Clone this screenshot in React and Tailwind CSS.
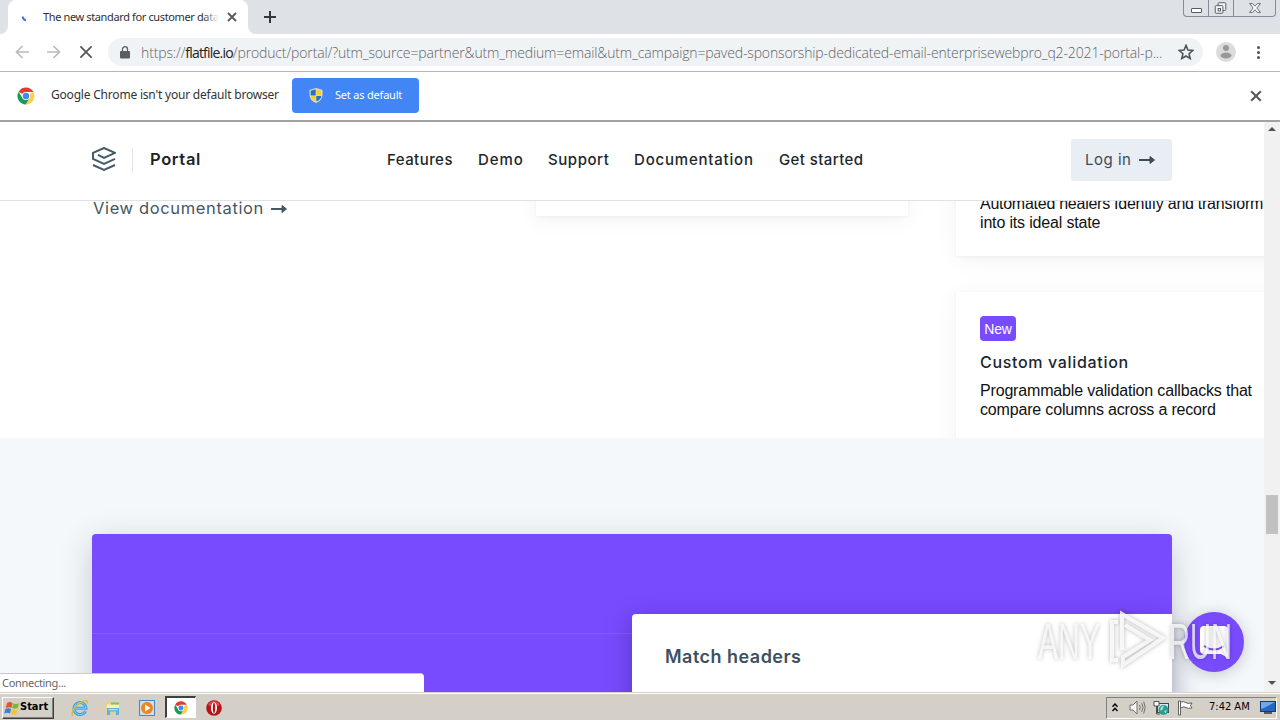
const navLinks = [
  { label: 'Features', className: 'w-[91px] tracking-[0.45px]' },
  { label: 'Demo', className: 'w-[70px] tracking-[0.9px]' },
  { label: 'Support', className: 'w-[86px] tracking-[0.55px]' },
  { label: 'Documentation', className: 'w-[145px] tracking-[0.8px]' },
  { label: 'Get started', className: 'w-[90px] tracking-[0.4px]' },
];

function Cross({ className, width = 1.8 }) {
  return (
    <svg viewBox="0 0 10 10" className={className} fill="none" stroke="currentColor" strokeWidth={width}>
      <path d="M1 1l8 8M9 1L1 9" />
    </svg>
  );
}

function ChromeLogo({ className }) {
  return (
    <svg viewBox="0 0 18 18" className={className}>
      <circle cx="9" cy="9" r="8.5" fill="#fff" />
      <path d="M9 9L1.6 4.7A8.5 8.5 0 0 1 16.4 4.9H9z" fill="#e33b2e" />
      <path d="M9 9l7.4-4.1A8.5 8.5 0 0 1 8.8 17.5L12.6 11z" fill="#fcd04b" />
      <path d="M9 9l3.4 2.2-3.6 6.3A8.5 8.5 0 0 1 1.6 4.7L5.4 11z" fill="#1a9c57" />
      <circle cx="9" cy="9" r="4.1" fill="#fff" />
      <circle cx="9" cy="9" r="3.2" fill="#4587f0" />
    </svg>
  );
}

function LongArrow({ className }) {
  return (
    <svg viewBox="0 0 17 10" className={className} fill="none" stroke="currentColor" strokeWidth="2">
      <path d="M0 5h14" />
      <path d="M11 1.5L15.500 5 11 8.500z" fill="currentColor" strokeWidth="1" />
    </svg>
  );
}

function TabStrip() {
  return (
    <div className="flex h-[34px] shrink-0 bg-[#dee1e6]">
      <div className="flex w-2 items-end bg-white">
        <div className="h-full w-2 rounded-br-lg bg-[#dee1e6]" />
      </div>
      <div className="flex h-full w-[240px] items-center rounded-t-lg bg-white pl-[13px]">
        <svg viewBox="0 0 8 8" className="mt-1 h-2 w-2" fill="none" stroke="#3f6fd1" strokeWidth="1.8">
          <path d="M1.5 1.5Q2 4.5 5 5.5" />
        </svg>
        <div className="relative ml-[14px] w-[176px] overflow-hidden font-['Noto_Sans',sans-serif] text-[11px] tracking-[-0.37px] whitespace-nowrap text-[#2f3033]">
          The new standard for customer data
          <div className="absolute inset-y-0 right-0 w-4 bg-linear-to-r from-white/0 to-white" />
        </div>
        <Cross className="ml-2 h-[10px] w-[10px] text-[#55585c]" />
      </div>
      <div className="w-2 bg-white">
        <div className="h-full w-2 rounded-bl-lg bg-[#dee1e6]" />
      </div>
      <svg viewBox="0 0 12 12" className="mt-[11px] ml-2 h-3 w-3" stroke="#34373b" strokeWidth="2">
        <path d="M6 0v12M0 6h12" />
      </svg>
      <div className="mr-1 ml-auto flex h-[17px] w-[93px] divide-x divide-[#858b98] rounded-b border border-t-0 border-[#858b98] text-[#555b66]">
        <div className="flex w-[25px] justify-center pt-2">
          <div className="h-[5px] w-[11px] rounded-[1px] border border-current bg-white" />
        </div>
        <svg viewBox="0 0 25 16" className="h-4 w-[25px]" fill="#f2f3f5" stroke="currentColor">
          <rect x="9.5" y="2.5" width="8" height="8" rx="1" />
          <rect x="6.500" y="5.5" width="8" height="8" rx="1" />
          <rect x="9.500" y="8.5" width="2.500" height="2.500" />
        </svg>
        <div className="flex flex-1 items-center justify-center">
          <svg viewBox="0 0 12 10" className="h-[10px] w-3" fill="#fff" stroke="currentColor" strokeWidth="0.9">
            <path d="M.6.6h3L6 3.200 8.400.6h3L7.800 5l3.600 4.400h-3L6 6.800 3.600 9.400h-3L4.200 5z" />
          </svg>
        </div>
      </div>
    </div>
  );
}

function Toolbar() {
  return (
    <div className="flex h-[38px] shrink-0 items-center border-b border-[#b6b6b8] bg-white pb-px pl-[15px]">
      <svg viewBox="0 0 14 14" className="h-[14px] w-[14px]" fill="none" stroke="#b9bbbe" strokeWidth="1.700">
        <path d="M14 7H1.500M7.500 1l-6 6 6 6" />
      </svg>
      <svg viewBox="0 0 14 14" className="ml-[18px] h-[14px] w-[14px]" fill="none" stroke="#b9bbbe" strokeWidth="1.700">
        <path d="M0 7h12.500M6.500 1l6 6-6 6" />
      </svg>
      <Cross className="ml-[18px] h-[14px] w-[14px] text-[#55585c]" width={1.300} />
      <div className="ml-[15px] flex h-[28px] w-[1095px] items-center rounded-full bg-[#f0f3f5] pl-3">
        <svg viewBox="0 0 10 13" className="h-[13px] w-[10px]" fill="#5a5d61">
          <path d="M1 5h8a1 1 0 0 1 1 1v5.500a1 1 0 0 1-1 1H1a1 1 0 0 1-1-1V6a1 1 0 0 1 1-1z" />
          <path d="M2.500 5.500V3.200a2.500 2.500 0 0 1 5 0v2.300" fill="none" stroke="#5a5d61" strokeWidth="1.300" />
        </svg>
        <div className="ml-[11px] w-[1026px] font-['Open_Sans',sans-serif] text-[14px] font-light tracking-[-0.135px] whitespace-nowrap text-[#5f6368]">
          https://<span className="font-normal tracking-[-0.8px] text-[#202124]">flatfile.io</span>
          /product/portal/?utm_source=partner&amp;utm_medium=email&amp;utm_campaign=paved-sponsorship-dedicated-email-enterprisewebpro_q2-2021-portal-p...
        </div>
        <svg viewBox="0 0 14 14" className="ml-[11px] h-4 w-4" fill="none" stroke="#505357" strokeWidth="1.400">
          <path d="M7 1.200l1.700 4 4.300.4-3.300 2.900 1 4.200L7 10.500l-3.700 2.200 1-4.200L1 5.600l4.300-.4z" />
        </svg>
      </div>
      <svg viewBox="0 0 20 20" className="ml-[13px] h-5 w-5">
        <circle cx="10" cy="10" r="10" fill="#dcdcdd" />
        <circle cx="10" cy="6" r="3" fill="#98999b" />
        <ellipse cx="10" cy="13.500" rx="5.500" ry="3" fill="#98999b" />
      </svg>
      <div className="ml-[21px] flex flex-col gap-[2px]">
        <div className="h-[3px] w-[3px] rounded-full bg-[#505357]" />
        <div className="h-[3px] w-[3px] rounded-full bg-[#505357]" />
        <div className="h-[3px] w-[3px] rounded-full bg-[#505357]" />
      </div>
    </div>
  );
}

function DefaultBrowserBar() {
  return (
    <div className="flex h-[50px] shrink-0 items-center border-b-2 border-[#a2a2a2] bg-white pb-[2px] pl-[17px] font-['Noto_Sans',sans-serif]">
      <ChromeLogo className="mt-[2px] h-[18px] w-[18px]" />
      <div className="ml-4 w-[241px] text-[12px] tracking-[-0.2px] whitespace-nowrap text-[#333]">
        Google Chrome isn't your default browser
      </div>
      <div className="flex h-[35px] w-[127px] items-center rounded bg-[#4285f4] pl-[17px] text-[11px] tracking-[-0.2px] text-white">
        <svg viewBox="0 0 14 15" className="h-[15px] w-[14px]">
          <path d="M7 0l6.500 2v5q0 5-6.500 8Q.5 12 .5 7V2z" fill="#e9e3c0" />
          <path d="M6.700 1.300V7.500H1.600V2.800z" fill="#2272c8" />
          <path d="M7.300 1.300V7.500h5.100V2.800z" fill="#f7cf2e" />
          <path d="M6.700 8v5.600Q2 11.500 1.600 8z" fill="#f7cf2e" />
          <path d="M7.300 8v5.600Q12 11.500 12.400 8z" fill="#2272c8" />
        </svg>
        <span className="ml-3 whitespace-nowrap">Set as default</span>
      </div>
      <Cross className="mt-[2px] mr-[18px] ml-auto h-3 w-3 text-[#55585c]" width={1.700} />
    </div>
  );
}

function SiteNav() {
  return (
    <nav className="flex h-[79px] shrink-0 items-center border-b border-[#dfe2e5] bg-white pb-[2px] pl-[92px] font-[Inter,sans-serif]">
      <svg viewBox="0 0 24 24" className="-mt-[2px] h-6 w-6" fill="none" stroke="#465a69" strokeWidth="2">
        <path d="M6 7.800l6 3 11-4.900L12 1 1 5.900v6l11 4.900 11-4.900" />
        <path d="M1 18l11 4.900L23 18" />
      </svg>
      <div className="ml-4 h-[25px] w-px bg-[#e1e4e8]" />
      <div className="-mt-[2px] ml-[17px] w-[237px] text-[16.5px] font-semibold tracking-[0.65px] text-[#1c2328]">
        Portal
      </div>
      <div className="flex text-[15px] font-medium text-[#20272c]">
        {navLinks.map((link) => (
          <div key={link.label} className={link.className}>
            <span className="whitespace-nowrap">{link.label}</span>
          </div>
        ))}
      </div>
      <div className="ml-[202px] flex h-[42px] w-[101px] items-center rounded-[3px] bg-[#e9eef5] pl-[14px] text-[15px] text-[#3e4a55]">
        <span className="w-[54px] tracking-[0.5px] whitespace-nowrap">Log in</span>
        <LongArrow className="h-[10px] w-[17px]" />
      </div>
    </nav>
  );
}

function FeatureCards() {
  return (
    <section className="flex h-[237px] shrink-0 overflow-hidden bg-white pl-[92px]">
      <div className="-mt-[5px] flex h-6 w-[444px] shrink-0 items-center pl-px font-[Inter,sans-serif] text-[16.5px] tracking-[0.63px] text-[#465664]">
        <span className="whitespace-nowrap">View documentation</span>
        <LongArrow className="mt-px ml-[7px] h-[10px] w-[17px]" />
      </div>
      <div className="-mt-4 h-[31px] w-[372px] shrink-0 bg-white shadow-[0_4px_24px_rgba(0,0,0,0.05),0_1px_3px_rgba(0,0,0,0.05)]" />
      <div className="ml-12 flex w-[372px] shrink-0 flex-col gap-9 font-['Liberation_Sans',sans-serif] text-[16px] leading-[19px] tracking-[-0.17px] text-[#111]">
        <div className="-mt-8 h-[87px] shrink-0 bg-white px-6 pt-[25px] shadow-[0_4px_24px_rgba(0,0,0,0.05),0_1px_3px_rgba(0,0,0,0.05)]">
          <p className="whitespace-nowrap">
            <span className="tracking-[-0.26px]">Automated healers Identify and transform</span>
            <br />
            into its ideal state
          </p>
        </div>
        <div className="h-[170px] shrink-0 bg-white px-6 pt-6 shadow-[0_4px_24px_rgba(0,0,0,0.05),0_1px_3px_rgba(0,0,0,0.05)]">
          <div className="flex h-[25px] w-9 items-center justify-center rounded bg-[#794bff] pt-px text-[14px] text-white">
            New
          </div>
          <h3 className="mt-[11px] font-[Inter,sans-serif] text-[16px] leading-5 font-medium tracking-[0.67px] text-[#1c2730]">
            Custom validation
          </h3>
          <p className="mt-[9px] whitespace-nowrap">
            Programmable validation callbacks that
            <br />
            compare columns across a record
          </p>
        </div>
      </div>
    </section>
  );
}

function MatchHeaders() {
  return (
    <section className="flex-1 overflow-hidden bg-[#f4f8fb] px-[92px] pt-24">
      <div className="flex h-[500px] w-[1080px] rounded bg-[#794bff] shadow-[0_8px_32px_rgba(40,50,70,0.22)]">
        <div className="mt-[99px] h-px w-[540px] bg-white/10" />
        <div className="mt-20 h-[420px] w-[540px] rounded-tl bg-white pt-[31px] pl-[33px] shadow-[-2px_4px_24px_rgba(30,20,80,0.3)]">
          <h2 className="font-[Inter,sans-serif] text-[18px] leading-6 font-semibold tracking-[0.48px] text-[#3d5060]">
            Match headers
          </h2>
        </div>
      </div>
    </section>
  );
}

function Watermark() {
  return (
    <svg viewBox="0 0 204 68" className="absolute top-[484px] left-[1032px] h-[68px] w-[204px] drop-shadow-[0_0_2px_rgba(0,0,0,0.35)]">
      <g fill="#fff" fillOpacity="0.75" fontFamily="'Liberation Sans Narrow', 'Liberation Sans', sans-serif" fontSize="50">
        <text x="6" y="53" textLength="62" lengthAdjust="spacingAndGlyphs">ANY</text>
        <text x="137" y="53" textLength="63" lengthAdjust="spacingAndGlyphs">RUN</text>
      </g>
      <g fill="none" stroke="#fff" strokeOpacity="0.8" strokeWidth="4">
        <path d="M90 44V8l41 24-40 27V51l27-17-25-15" />
        <path d="M86 16h-6v38h6" />
      </g>
    </svg>
  );
}

function Scrollbar() {
  return (
    <div className="flex w-4 shrink-0 flex-col items-center bg-[#f1f1f1]">
      <svg viewBox="0 0 8 4" className="mt-[5px] h-1 w-2" fill="#505050">
        <path d="M0 4l4-4 4 4z" />
      </svg>
      <div className="mt-[364px] h-[39px] w-3 bg-[#c1c1c1]" />
      <svg viewBox="0 0 8 4" className="mt-auto mb-[7px] h-1 w-2" fill="#505050">
        <path d="M0 0l4 4 4-4z" />
      </svg>
    </div>
  );
}

function Taskbar() {
  return (
    <div className="flex h-7 shrink-0 items-center border-t border-[#d4d0c8] bg-[#d4d0c8] font-['DejaVu_Sans_Condensed','DejaVu_Sans',sans-serif] text-[11px] text-black shadow-[inset_0_1px_0_#fff]">
      <div className="mt-[2px] ml-[2px] flex h-[22px] w-[52px] items-center border border-t-white border-r-[#404040] border-b-[#404040] border-l-white pl-[1px] font-bold shadow-[inset_-1px_-1px_0_#808080]">
        <svg viewBox="0 0 16 16" className="h-4 w-4">
          <path d="M3 3q3-2 5.500 0L7.500 8Q5 6.500 1.700 8z" fill="#e8542a" />
          <path d="M9.300 3.300q2.500 1.500 5.700 0L13.700 8q-3 1.500-5.500 0z" fill="#7cb838" />
          <path d="M1.400 9q3-1.500 5.700 0L6 13.500Q3.500 12 .3 13.500z" fill="#3d7edb" />
          <path d="M8 9.200q2.500 1.500 5.500 0L12.300 14q-3 1.500-5.400-.2z" fill="#f5c52c" />
        </svg>
        <span>Start</span>
      </div>
      {/* Internet Explorer */}
      <svg viewBox="0 0 18 18" className="mt-[2px] ml-[17px] h-[18px] w-[18px]" fill="none">
        <path d="M14.500 12A6 6 0 1 1 15 9.300H5" stroke="#3d9fe0" strokeWidth="3" />
        <path d="M14.500 12A6 6 0 1 1 15 9.300H5" stroke="#8fd0f5" strokeWidth="1" />
        <path d="M2 16.500C-1 14 5 5 12 2.300c4-1.600 5-.3 4 2.200" stroke="#e5b92e" strokeWidth="1.400" />
      </svg>
      {/* Explorer */}
      <svg viewBox="0 0 18 18" className="mt-[2px] ml-[15px] h-[18px] w-[18px]">
        <path d="M2 3h5l1 1.500h8V14H2z" fill="#ecd27a" />
        <path d="M3 5.500h12V9H3z" fill="#fbf0b8" />
        <path d="M7 3.500h8v2H7z" fill="#83c25c" />
        <path d="M3 9h12v7h-3v-3.500H6V16H3z" fill="#5fb0de" />
        <path d="M4.500 10h9v1.200h-9z" fill="#b7e2f7" />
      </svg>
      {/* Media Player */}
      <svg viewBox="0 0 18 18" className="mt-[2px] ml-4 h-[18px] w-[18px]">
        <rect x="1.500" y="1.500" width="15" height="15" fill="#c6e0f7" stroke="#4b86c6" />
        <circle cx="9" cy="9" r="6" fill="#f08519" />
        <path d="M7 5.500v7L12.500 9z" fill="#fff" />
      </svg>
      <div className="mt-[1px] ml-[9px] flex h-[22px] w-[31px] items-center justify-center border border-t-2 border-l-2 border-t-[#404040] border-r-white border-b-white border-l-[#404040] bg-white">
        <ChromeLogo className="h-[14px] w-[14px]" />
      </div>
      <svg viewBox="0 0 16 16" className="mt-[2px] ml-[10px] h-4 w-4">
        <circle cx="8" cy="8" r="7.800" fill="#b3151b" />
        <path d="M2 5a6.500 6.500 0 0 1 12 0q-6 3-12 0z" fill="#d8484b" />
        <ellipse cx="8" cy="8" rx="3" ry="5.800" fill="#fff" />
        <ellipse cx="8" cy="8" rx="1.200" ry="5" fill="#b3151b" />
      </svg>
      <div className="mt-[2px] mr-[3px] ml-auto flex h-[22px] w-[171px] items-center border border-t-[#808080] border-r-white border-b-white border-l-[#808080] pl-[5px]">
        <svg viewBox="0 0 6 9" className="h-[9px] w-[6px]" fill="none" stroke="#000" strokeWidth="1.400">
          <path d="M.5 3.800L3 1l2.500 2.800M.5 8L3 5.200 5.500 8" />
        </svg>
        <svg viewBox="0 0 17 15" className="ml-[11px] h-[15px] w-[17px]" fill="none" stroke="#707070">
          <path d="M1 5h3l4-4v13l-4-4H1z" fill="#f6f6f6" />
          <path d="M10.500 5q1.500 2.500 0 5M12.700 3.200q2.600 4.300 0 8.600M14.700 1.500q3 6 0 12" />
        </svg>
        <svg viewBox="0 0 17 16" className="ml-[7px] h-4 w-[17px]">
          <rect x="4.500" y="3.500" width="11" height="9" fill="#d6e8ee" stroke="#3c4850" />
          <path d="M1 1.500h5V6H1z" fill="#fff" stroke="#505050" />
          <path d="M3.500 6v8H7" fill="none" stroke="#505050" />
          <circle cx="10.500" cy="10" r="5" fill="#2c9d93" />
          <path d="M7 9q2-4 4-3l-1 3-2 2zM11 11l3-1-1.500 3.500z" fill="#8fe0cd" />
        </svg>
        <svg viewBox="0 0 17 16" className="ml-[7px] h-4 w-[17px]" fill="#fff" stroke="#606060">
          <path d="M1.500 1h2v14h-2zM3.500 2q3-1 5 .5t6.500.5l-1.500 2.500L15 8q-4 1-6-.500T3.500 8z" />
        </svg>
        <span className="ml-[15px] w-[51px] whitespace-nowrap">7:42 AM</span>
        <svg viewBox="0 0 16 13" className="h-[13px] w-4">
          <rect x=".5" y=".5" width="15" height="10" fill="#2567c4" stroke="#183a6e" />
          <path d="M1 1h14L4 7l-3 1z" fill="#6fa9e8" />
          <path d="M4 12h8" stroke="#333" strokeWidth="1.500" />
        </svg>
      </div>
    </div>
  );
}

export default function App() {
  return (
    <div className="flex h-[720px] w-[1280px] flex-col overflow-hidden bg-white">
      <TabStrip />
      <Toolbar />
      <DefaultBrowserBar />
      <div className="relative flex h-[570px] shrink-0">
        <main className="flex min-w-0 flex-1 flex-col overflow-hidden">
          <SiteNav />
          <FeatureCards />
          <MatchHeaders />
        </main>
        <Scrollbar />
        {/* Chat launcher */}
        <div className="absolute top-[490px] left-[1184px] flex h-[60px] w-[60px] items-center justify-center rounded-full bg-[#794bff] shadow-[0_2px_16px_rgba(0,0,0,0.2)]">
          <svg viewBox="0 0 28 32" className="h-8 w-7">
            <path d="M4 0h20a4 4 0 0 1 4 4v28l-7-4H4a4 4 0 0 1-4-4V4a4 4 0 0 1 4-4z" fill="#fff" />
            <path d="M4 20q10 7 20 0" fill="none" stroke="#794bff" strokeWidth="2" />
          </svg>
        </div>
        <Watermark />
        <div className="absolute bottom-0 left-0 flex h-[19px] w-[424px] items-center rounded-tr border-t border-[#c9c9cc] bg-white pl-[2px] font-['Noto_Sans',sans-serif] text-[11px] tracking-[-0.3px] text-[#666]">
          Connecting...
        </div>
      </div>
      <Taskbar />
    </div>
  );
}
